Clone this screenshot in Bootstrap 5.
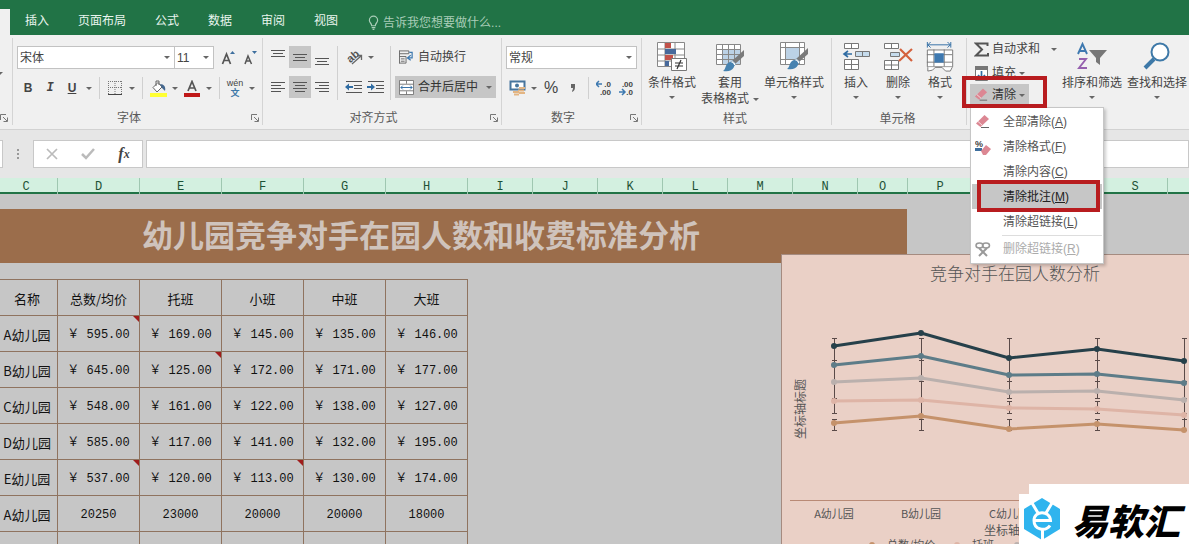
<!DOCTYPE html>
<html lang="zh-CN">
<head>
<meta charset="utf-8">
<meta name="viewport" content="width=device-width, initial-scale=1">
<title>幼儿园竞争对手分析 - Excel</title>
<link href="https://cdn.jsdelivr.net/npm/bootstrap@5.3.0/dist/css/bootstrap.min.css" rel="stylesheet">
<style>
body{font-family:"Liberation Sans","Noto Sans CJK SC",sans-serif;font-size:12px;line-height:16px;color:#444;background:#c6c6c6;height:100vh;overflow:hidden}
/* tab strip */
.tabstrip{background:#217346;height:35px;--bs-nav-link-color:#fff}
.tabstrip .nav-link{color:#e9f5ee;font-size:12px;line-height:16px;padding:12px 14px 6px 15px}
.tabstrip .stub{width:10px;height:26px;background:#f0f0f0}
.tellme{background:none;border:0;outline:0;color:#a9cdb8;width:200px;padding:0;font-size:12px}
.tellme::placeholder{color:#a9cdb8}
/* ribbon */
.ribbon{background:#f0f0f0;border-bottom:1px solid #d2d2d2;height:95px;padding:3px 0 4px}
.grp{border-right:1px solid #d4d4d4;flex:none}
.grp-first{width:13px}.grp-font{width:250px}.grp-align{width:239px}.grp-num{width:140px}.grp-style{width:190px}.grp-cells{width:135px}
.grp footer{height:14px;padding-right:3px;color:#5a5a5a}
.grp-font footer span,.grp-align footer span,.grp-num footer span{padding-right:6px}
.grp svg,.menu svg{flex:none;display:block}
.rb{--bs-btn-padding-x:0;--bs-btn-padding-y:0;--bs-btn-border-width:0px;--bs-btn-border-radius:0;--bs-btn-font-size:12px;--bs-btn-line-height:16px;--bs-btn-color:#444;--bs-btn-active-bg:#c6c6c6;--bs-btn-active-color:#333;--bs-btn-hover-bg:#d5d5d5;display:flex;align-items:center;justify-content:center;flex:none;height:22px;white-space:nowrap}
.sq{width:22px}.car{width:12px}
.bar{width:1px;height:22px;background:#d0d0d0}
.tall{width:1px;height:54px;background:#d0d0d0}
.rsel{--bs-form-select-bg-img:url("data:image/svg+xml,%3csvg xmlns='http://www.w3.org/2000/svg' viewBox='0 0 6 3'%3e%3cpath d='M0 0h6L3 3z' fill='%23666'/%3e%3c/svg%3e");height:23px;padding:0 14px 0 2px;font-size:12px;line-height:20px;color:#444;border:1px solid #c2c2c2;border-radius:0;background-size:6px 3px;background-position:right 4px center;background-color:#fff}
.big{flex-direction:column;justify-content:flex-start;height:66px;padding-top:4px}
.big svg.ic{height:30px}
.big .cap{height:16px;margin-top:3px}
.big svg.dn{margin-top:5px}
.edit{padding-left:3px}
.edit-col{width:90px}
.edit-col .rb{gap:3px;padding:0 4px;margin-bottom:2px}
.edit-col .dropdown .rb{margin:-2px 0 0}
.mark-red{position:absolute;border:4px solid #b81c1f;pointer-events:none;z-index:1002}
.menu.dropdown-menu{position:absolute;top:23px;left:0;min-width:134px;padding:1px 1px 2px;font-size:12px;border:1px solid #c6c6c6;border-radius:0;box-shadow:2px 2px 3px rgba(0,0,0,.2);background:#fff;color:#555}
.menu .dropdown-item{display:flex;align-items:center;gap:12px;height:25px;padding:0 2px 0 3px;color:#555;line-height:16px}
.menu .dropdown-item.active{background:#c6c6c6;color:#222}
.menu .dropdown-item.disabled{color:#ababab}
.menu .dropdown-divider{margin:1px 0 0 30px;border-color:#ddd}
/* formula bar */
.fbar{background:#e6e6e6;padding:10px 0;height:48px}
.box{background:#fff;border:1px solid #c8c8c8;height:28px}
.fin{border:1px solid #c8c8c8;border-radius:0;height:28px;min-height:0;padding:0 4px;font-size:12px;margin-left:3px}
.fx{font-family:"Liberation Serif",serif}
/* grid */
.colhead{display:grid;grid-template-columns:58px repeat(5,82px) repeat(6,65px) 50px repeat(4,65px) 1fr;height:16px;background:#d3f0e0;border-bottom:2px solid #217346;font:12px/18px "Liberation Mono",monospace;color:#1d5236;text-align:center}
.colhead span{border-right:1px solid #9fc7b1}
.colhead span:first-child{padding-right:5px}
.sheet{background:#c6c6c6;padding-top:15px;overflow:hidden;min-height:0}
.band{width:907px;height:54px;background:#9b6d4b;color:#cfc3bc;font-size:31px;line-height:56px;font-weight:700;padding-right:65px;margin:0 0 16px}
.data{width:468px;table-layout:fixed;border-collapse:separate;border-spacing:0;border-top:1px solid #8f735f;color:#111;font:12px/16px "Liberation Mono","Noto Sans CJK SC",monospace;text-align:center}
.data td,.data th{border:solid #8f735f;border-width:0 1px 1px 0;height:36px;padding:2px 0 0;font-weight:400;position:relative;white-space:nowrap}
.data th{font:13px/16px "Noto Sans CJK SC",sans-serif}
.data tbody th,.data th:first-child{padding-right:3px}
.note::after{content:"";position:absolute;top:0;right:0;border:3px solid #a01c1c;border-left-color:transparent;border-bottom-color:transparent}
.chartbox{position:absolute;left:781px;right:0;top:60px;bottom:0;background:#ead0c6;border:1px solid #a58b80;border-width:1px 0 0 1px;overflow:hidden}
.chartbox text{font-family:"Noto Sans CJK SC",sans-serif;fill:#555}
.brand{position:absolute;right:0;bottom:0;width:170px;height:60px;background:#fff;clip-path:polygon(10px 0,100% 0,100% 100%,0 100%,0 10px,10px 10px);padding:9px 9px 0 4px}
.brand b{font:italic 900 36px/52px "Noto Sans CJK SC",sans-serif;color:#000}
</style>
</head>
<body class="d-flex flex-column">
<svg width="0" height="0" class="position-absolute" aria-hidden="true">
  <symbol id="dn" viewBox="0 0 6 3"><path d="M0 0h6L3 3z" fill="#666"/></symbol>
  <symbol id="launch" viewBox="0 0 8 8"><path d="M.5 6V.5H6M3 3l4 4M7.500 3.500v4h-4" fill="none" stroke="#777"/></symbol>
  <symbol id="eraser" viewBox="0 0 16 16"><path d="M1 9.500 9.500 1 14 5 5.500 13z" fill="#dc8793"/><path d="m3 7.500 4.500 4" stroke="#f5dfe1"/><path d="M6 13.500h8" stroke="#666"/></symbol>
  <symbol id="brush" viewBox="0 0 22 22"><path d="M21 0v6L12 14 9 11z" fill="#7a7a7a"/><path d="M9 10.500 13 14l-2 2-4-3z" fill="#fff" stroke="#8aa7bd"/><path d="M7 12c3 0 5 3 4 5-2 4-6 5-11 4 3-1 2-8 7-9z" fill="#4682b0"/></symbol>
</svg>

<nav class="tabstrip nav flex-nowrap align-items-end flex-shrink-0" aria-label="功能区">
  <div class="stub"></div>
  <a class="nav-link" href="#">插入</a>
  <a class="nav-link" href="#">页面布局</a>
  <a class="nav-link" href="#">公式</a>
  <a class="nav-link" href="#">数据</a>
  <a class="nav-link" href="#">审阅</a>
  <a class="nav-link" href="#">视图</a>
  <label class="d-flex align-items-center ps-3 pb-1">
    <svg class="me-1" width="11" height="16" viewBox="0 0 12 16" fill="none" stroke="#a9cdb8" stroke-width="1.300"><path d="M4 11C4 8 1.500 8 1.500 5a4.500 4.500 0 0 1 9 0c0 3-2.500 3-2.500 6zM4 13h4M5 15h2"/></svg>
    <input class="tellme" type="text" placeholder="告诉我您想要做什么..." aria-label="告诉我您想要做什么">
  </label>
</nav>

<div class="ribbon d-flex flex-shrink-0">
  <section class="grp grp-first d-flex flex-column justify-content-between">
    <svg class="mt-4" width="3" height="20" viewBox="0 0 3 20"><path d="M-3 10h6l-3 3z" fill="#666"/></svg>
    <footer class="d-flex align-items-center"><svg width="8" height="8"><use href="#launch"/></svg></footer>
  </section>

  <section class="grp grp-font d-flex flex-column">
    <div class="d-flex align-items-center pt-2 ps-1">
      <select class="form-select rsel" style="width:158px" aria-label="字体"><option>宋体</option></select>
      <select class="form-select rsel border-start-0" style="width:39px" aria-label="字号"><option>11</option></select>
      <button class="btn rb sq ms-1" aria-label="增大字号"><svg width="16" height="16" viewBox="0 0 16 16"><path d="m1.500 14 4-10 4 10M3 10.500h5" fill="none" stroke="#555" stroke-width="1.700"/><path d="m9 4 2.500-3L14 4z" fill="#3e6f9e"/></svg></button>
      <button class="btn rb sq" aria-label="减小字号"><svg width="16" height="16" viewBox="0 0 16 16"><path d="m2 14 3-8 3.500 8M3 11h4" fill="none" stroke="#555" stroke-width="1.500"/><path d="M9 1h5l-2.500 3z" fill="#3e6f9e"/></svg></button>
    </div>
    <div class="d-flex align-items-center mt-2 ps-1">
      <button class="btn rb sq fw-bold">B</button>
      <button class="btn rb sq fw-bold fst-italic font-monospace">I</button>
      <button class="btn rb sq fw-bold text-decoration-underline">U</button>
      <button class="btn rb car" aria-label="下划线样式"><svg width="6" height="3"><use href="#dn"/></svg></button>
      <div class="bar ms-1 me-1"></div>
      <button class="btn rb sq" aria-label="边框"><svg width="14" height="14" viewBox="0 0 14 14" fill="none" stroke="#777"><path d="M.5 0v13M13.500 0v13M7 0v13M0 .5h14M0 6.500h14" stroke-dasharray="1 1"/><path d="M0 13.500h14" stroke="#444"/></svg></button>
      <button class="btn rb car" aria-label="边框样式"><svg width="6" height="3"><use href="#dn"/></svg></button>
      <div class="bar ms-1 me-1"></div>
      <button class="btn rb sq" aria-label="填充颜色"><svg width="17" height="17" viewBox="0 0 17 17"><path d="M3 7.500 8 2.500l4 4.500-5 5z" fill="#fff" stroke="#666"/><path d="M6 6V1h3v4" fill="none" stroke="#666"/><path d="M10 4c4 0 6 3 5 7l-3-3z" fill="#45688f"/><path d="M0 13h17v4H0z" fill="#ff3"/></svg></button>
      <button class="btn rb car" aria-label="填充颜色选项"><svg width="6" height="3"><use href="#dn"/></svg></button>
      <button class="btn rb sq" aria-label="字体颜色"><svg width="16" height="17" viewBox="0 0 16 17"><path d="M4 11 8 1.500 12 11M5.500 8h5" fill="none" stroke="#555" stroke-width="1.700"/><path d="M0 13h16v4H0z" fill="#c01818"/></svg></button>
      <button class="btn rb car" aria-label="字体颜色选项"><svg width="6" height="3"><use href="#dn"/></svg></button>
      <div class="bar ms-1 me-1"></div>
      <button class="btn rb sq" aria-label="拼音"><svg width="18" height="18" viewBox="0 0 18 18" overflow="visible"><text x="9" y="7" text-anchor="middle" font-size="9" fill="#444">wén</text><text x="9" y="17" text-anchor="middle" font-size="9" font-weight="700" fill="#3e79a8">文</text></svg></button>
      <button class="btn rb car" aria-label="拼音选项"><svg width="6" height="3"><use href="#dn"/></svg></button>
    </div>
    <footer class="d-flex align-items-center mt-auto"><span class="flex-grow-1 text-center">字体</span><svg width="8" height="8"><use href="#launch"/></svg></footer>
  </section>

  <section class="grp grp-align d-flex flex-column">
    <div class="d-flex pt-2 ps-1">
      <div>
        <div class="d-flex">
          <button class="btn rb sq" aria-label="顶端对齐"><svg width="14" height="14" viewBox="0 0 14 14" stroke="#555"><path d="M0 .5h14M2 3.500h10M0 6.500h14"/></svg></button>
          <button class="btn rb sq active" aria-label="垂直居中"><svg width="14" height="14" viewBox="0 0 14 14" stroke="#555"><path d="M0 4.500h14M2 7.500h10M0 10.500h14"/></svg></button>
          <button class="btn rb sq" aria-label="底端对齐"><svg width="14" height="14" viewBox="0 0 14 14" stroke="#555" overflow="visible"><path d="M0 8.500h14M2 11.500h10M0 14.500h14"/></svg></button>
        </div>
        <div class="d-flex pt-2">
          <button class="btn rb sq" aria-label="左对齐"><svg width="14" height="12" viewBox="0 0 14 12" stroke="#555"><path d="M0 1.500h14M0 4.500h10M0 7.500h14M0 10.500h10"/></svg></button>
          <button class="btn rb sq active" aria-label="居中"><svg width="14" height="12" viewBox="0 0 14 12" stroke="#555"><path d="M0 1.500h14M2 4.500h10M0 7.500h14M2 10.500h10"/></svg></button>
          <button class="btn rb sq" aria-label="右对齐"><svg width="14" height="12" viewBox="0 0 14 12" stroke="#555"><path d="M0 1.500h14M4 4.500h10M0 7.500h14M4 10.500h10"/></svg></button>
        </div>
      </div>
      <div class="tall mx-1"></div>
      <div>
        <button class="btn rb ps-1" aria-label="方向"><svg width="18" height="18" viewBox="0 0 18 18" overflow="visible"><text x="1" y="12" font-size="11" font-weight="700" fill="#555" transform="rotate(-40 7 9)">ab</text><path d="M6 16 15 8M11 7.500h4.500V12" fill="none" stroke="#666" stroke-width="1.300"/></svg><svg class="ms-1" width="6" height="3"><use href="#dn"/></svg></button>
        <div class="d-flex pt-2">
          <button class="btn rb sq" aria-label="减少缩进"><svg width="17" height="14" viewBox="0 0 17 14"><path d="M1 1.500h16M9 5.500h8M9 8.500h8M1 12.500h16" stroke="#555"/><path d="M0 7l4-3.500V6h4v2H4v2.500z" fill="#2f6ca3"/></svg></button>
          <button class="btn rb sq" aria-label="增加缩进"><svg width="17" height="14" viewBox="0 0 17 14"><path d="M1 1.500h16M9 5.500h8M9 8.500h8M1 12.500h16" stroke="#555"/><path d="M8 7 4 3.500V6H0v2h4v2.500z" fill="#2f6ca3"/></svg></button>
        </div>
      </div>
      <div class="tall mx-1"></div>
      <div>
        <button class="btn rb px-1 gap-1"><svg width="15" height="16" viewBox="0 0 16 16" fill="none"><path d="M.5 1v14M.5 1.500h10v3H.5M.5 7.500h7v7H.5M2 10h4M2 12.500h4" stroke="#666"/><path d="M11 3h3v6h-4m2.500-3L9 9l3.500 2.500" stroke="#3e79b0" stroke-width="1.300"/></svg>自动换行</button>
        <div class="pt-2"><button class="btn rb active px-1 gap-1"><svg width="15" height="15" viewBox="0 0 16 16"><path d="M.5.5h15v15H.5zM.5 4.500h15M.5 11.500h15M8 0v4M8 12v4" fill="#fff" stroke="#777"/><path d="M2 8h12M4 6 2 8l2 2M12 6l2 2-2 2" fill="none" stroke="#2f6ca3"/></svg>合并后居中<svg class="ms-1" width="6" height="3"><use href="#dn"/></svg></button></div>
      </div>
    </div>
    <footer class="d-flex align-items-center mt-auto"><span class="flex-grow-1 text-center">对齐方式</span><svg width="8" height="8"><use href="#launch"/></svg></footer>
  </section>

  <section class="grp grp-num d-flex flex-column">
    <div class="pt-2 px-1"><select class="form-select rsel" aria-label="数字格式"><option>常规</option></select></div>
    <div class="d-flex align-items-center mt-2 ps-1">
      <button class="btn rb sq" aria-label="会计数字格式"><svg width="17" height="16" viewBox="0 0 17 16"><path d="M1.500 1.500h14v8h-14z" fill="#fff" stroke="#47759d" stroke-width="2"/><circle cx="8" cy="5.500" r="2" fill="#47759d"/><path d="M10 8h6M9 10.500h6M4 12h6M10 13h6M5 14.500h5" stroke="#e3b583" stroke-width="2"/></svg></button>
      <button class="btn rb car" aria-label="货币选项"><svg width="6" height="3"><use href="#dn"/></svg></button>
      <button class="btn rb sq fs-6">%</button>
      <button class="btn rb sq" aria-label="千位分隔样式"><svg width="8" height="10" viewBox="0 0 8 10"><path d="M2 1h4v3c0 3-1 4-3 5 0-2 1-2 1-4H2z" fill="#666"/></svg></button>
      <div class="bar ms-1 me-1"></div>
      <button class="btn rb sq" aria-label="增加小数位数"><svg width="16" height="16" viewBox="0 0 16 16"><text x="15" y="7" text-anchor="end" font-size="8" font-weight="700" fill="#444">.0</text><text x="15" y="15" text-anchor="end" font-size="8" font-weight="700" fill="#444">.00</text><path d="M0 4h6M3 1 0 4l3 3" fill="none" stroke="#3e79b0" stroke-width="1.500"/></svg></button>
      <button class="btn rb sq" aria-label="减少小数位数"><svg width="16" height="16" viewBox="0 0 16 16"><text x="15" y="7" text-anchor="end" font-size="8" font-weight="700" fill="#444">.00</text><text x="15" y="15" text-anchor="end" font-size="8" font-weight="700" fill="#444">.0</text><path d="M1 12h6M4 9l3 3-3 3" fill="none" stroke="#3e79b0" stroke-width="1.500"/></svg></button>
    </div>
    <footer class="d-flex align-items-center mt-auto"><span class="flex-grow-1 text-center">数字</span><svg width="8" height="8"><use href="#launch"/></svg></footer>
  </section>

  <section class="grp grp-style d-flex flex-column">
    <div class="d-flex px-1">
      <button class="btn rb big" style="width:52px"><svg class="ic" width="30" height="30" viewBox="0 0 30 30"><path d="M.5.5h27v24H.5zM8 0v24M18 0v24M0 7h28M0 13h28M0 19h28" fill="#fff" stroke="#888"/><path d="M8 1h6v5H8zM8 13h8v5H8z" fill="#c2524a"/><path d="M8 7h11v5H8zM8 19h4v5H8z" fill="#47699b"/><path d="M14.500 16.500h15v12h-15z" fill="#fff" stroke="#777"/><path d="M18 21h8M18 24h8M24 18l-4 9" stroke="#333" stroke-width="1.200"/></svg><span class="cap">条件格式</span><svg class="dn" width="6" height="3"><use href="#dn"/></svg></button>
      <button class="btn rb big" style="width:64px"><svg class="ic" width="30" height="30" viewBox="0 0 30 30"><path d="M1.500 2.500h24v20h-24z" fill="#fff"/><path d="M7 7h19v15H7z" fill="#bcd2e6"/><path d="M1.500 2.500h24v20h-24zM7.500 2v20M13.500 2v20M19.500 2v20M1 7.500h25M1 12.500h25M1 17.500h25" fill="none" stroke="#888"/><use href="#brush" x="8" y="8" width="22" height="22"/></svg><span class="cap">套用</span><span class="d-flex align-items-center gap-1">表格格式<svg width="6" height="3"><use href="#dn"/></svg></span></button>
      <button class="btn rb big" style="width:64px"><svg class="ic" width="30" height="30" viewBox="0 0 30 30"><path d="M1.500.5h24v22h-24zM6.500 0v22M20.500 0v22M1 5.500h24M1 17.500h24" fill="#fff" stroke="#888"/><path d="M7 6h13v11H7z" fill="#bcd2e6"/><use href="#brush" x="8" y="6" width="22" height="22"/></svg><span class="cap">单元格样式</span><svg class="dn" width="6" height="3"><use href="#dn"/></svg></button>
    </div>
    <footer class="mt-auto text-center">样式</footer>
  </section>

  <section class="grp grp-cells d-flex flex-column">
    <div class="d-flex edit">
      <button class="btn rb big" style="width:42px"><svg class="ic" width="28" height="30" viewBox="0 0 28 30"><path d="M2.500 1.500h14v5h-14zM9.500 1v5M2.500 17.500h14v10h-14zM9.500 17v10M2 22.500h14" fill="#fff" stroke="#777"/><path d="M13.500 9.500h14v5h-14zM20.500 9v6" fill="#c6dced" stroke="#777"/><path d="M2 12h8M6 9l-4 3 4 3" fill="none" stroke="#2f6ca3" stroke-width="1.600"/></svg><span class="cap">插入</span><svg class="dn" width="6" height="3"><use href="#dn"/></svg></button>
      <button class="btn rb big" style="width:42px"><svg class="ic" width="30" height="30" viewBox="0 0 30 30"><path d="M1.500 1.500h14v5h-14zM8.500 1v5M1.500 18.500h14v9h-14zM8.500 18v9M1 23h14" fill="#fff" stroke="#777"/><path d="M7.500 10.500h9v4h-9z" fill="#c6dced" stroke="#777"/><path d="M17 7l12 12M29 7 16 19" stroke="#d4613d" stroke-width="2.200"/></svg><span class="cap">删除</span><svg class="dn" width="6" height="3"><use href="#dn"/></svg></button>
      <button class="btn rb big" style="width:42px"><svg class="ic" width="30" height="32" viewBox="0 0 30 32"><path d="M2 3h24M5 0 2 3l3 3M23 0l3 3-3 3M1.500 0v6M26.500 0v6" fill="none" stroke="#2f6ca3"/><path d="M1.500 8.500h27v18h-27zM8.500 8v18M19.500 8v18M1 13.500h27M1 21.500h27" fill="#fff" stroke="#777"/><path d="M9 12h10v10H9z" fill="#3e79b0"/><path d="M2 27v4l5-1 3-3h7l4 4h5l2-4" fill="#fff" stroke="#777"/></svg><span class="cap">格式</span><svg class="dn" width="6" height="3"><use href="#dn"/></svg></button>
    </div>
    <footer class="mt-auto text-center">单元格</footer>
  </section>

  <section class="d-flex edit flex-grow-1">
    <div class="edit-col">
      <button class="btn rb"><svg width="15" height="15" viewBox="0 0 15 15"><path d="M13.500 4V1.500H2L8 7.500 2 13.500h12V11" fill="none" stroke="#555" stroke-width="2"/></svg>自动求和<svg class="ms-2" width="6" height="3"><use href="#dn"/></svg></button>
      <button class="btn rb"><svg width="15" height="15" viewBox="0 0 15 15"><path d="M1.500 1.500h12v13h-12z" fill="#fff" stroke="#777"/><path d="M1 0h13v4H1z" fill="#777"/><path d="M7.500 5v7M4 9l3.500 3.500L11 9" fill="none" stroke="#2f6ca3" stroke-width="1.700"/></svg>填充<svg width="6" height="3"><use href="#dn"/></svg></button>
      <div class="dropdown position-relative">
        <button class="btn rb active" aria-expanded="true"><svg width="15" height="16"><use href="#eraser"/></svg>清除<svg width="6" height="3"><use href="#dn"/></svg></button>
        <span class="mark-red" style="left:-8px;top:-8px;width:85px;height:32px"></span>
        <div class="menu dropdown-menu show">
          <a class="dropdown-item" href="#"><svg width="16" height="16"><use href="#eraser"/></svg><span>全部清除(<u>A</u>)</span></a>
          <a class="dropdown-item" href="#"><svg width="16" height="16" viewBox="0 0 16 16"><text y="8" font-size="9" font-weight="700" fill="#444">%</text><path d="M0 9h7v3H0z" fill="#3e6f9e"/><path d="m6 12 5-6 5 4-5 6H8z" fill="#dc8793"/></svg><span>清除格式(<u>F</u>)</span></a>
          <a class="dropdown-item" href="#"><svg width="16" height="16"></svg><span>清除内容(<u>C</u>)</span></a>
          <div class="position-relative">
            <a class="dropdown-item active" href="#"><svg width="16" height="16"></svg><span>清除批注(<u>M</u>)</span></a>
            <span class="mark-red" style="left:5px;top:-4px;right:2px;height:32px"></span>
          </div>
          <a class="dropdown-item" href="#"><svg width="16" height="16"></svg><span>清除超链接(<u>L</u>)</span></a>
          <hr class="dropdown-divider">
          <a class="dropdown-item disabled" href="#" aria-disabled="true"><svg width="16" height="16" viewBox="0 0 16 16" fill="none" stroke="#999" stroke-width="1.500"><ellipse cx="4.500" cy="4.500" rx="3.500" ry="2.500"/><ellipse cx="11" cy="4.500" rx="3.500" ry="2.500"/><path d="m4 7 8 8M12 7l-8 8" stroke-width="2"/></svg><span>删除超链接(<u>R</u>)</span></a>
        </div>
      </div>
    </div>
    <button class="btn rb big" style="width:64px"><svg class="ic" width="30" height="30" viewBox="0 0 30 30"><path d="m1 12 4.500-10L10 12M3 9h5" fill="none" stroke="#3e79b0" stroke-width="1.900"/><path d="M2 17h7L2 26h8" fill="none" stroke="#9560ae" stroke-width="1.900"/><path d="M12 8h18l-7 8v7l-4-3v-4z" fill="#777"/></svg><span class="cap">排序和筛选</span><svg class="dn" width="6" height="3"><use href="#dn"/></svg></button>
    <button class="btn rb big" style="width:66px"><svg class="ic" width="30" height="30" viewBox="0 0 30 30" fill="none" stroke="#3e79a8"><circle cx="18" cy="10" r="8.500" fill="#fff" stroke-width="2"/><path d="m12 17-9 9" stroke-width="4"/></svg><span class="cap">查找和选择</span><svg class="dn" width="6" height="3"><use href="#dn"/></svg></button>
  </section>
</div>

<div class="fbar d-flex flex-shrink-0">
  <div class="box border-start-0" style="width:3px"></div>
  <svg class="mx-2" width="14" height="28" viewBox="0 0 14 28"><path d="M7 9v11" stroke="#999" stroke-width="2" stroke-dasharray="2 2"/></svg>
  <div class="box d-flex align-items-center justify-content-around" style="width:110px">
    <button class="btn rb sq" aria-label="取消"><svg width="12" height="12" viewBox="0 0 12 12"><path d="m1 1 10 10M11 1 1 11" stroke="#bbb" stroke-width="1.700"/></svg></button>
    <button class="btn rb sq" aria-label="输入"><svg width="14" height="12" viewBox="0 0 14 12"><path d="m1 6 4 4 8-9" fill="none" stroke="#bbb" stroke-width="2.500"/></svg></button>
    <button class="btn rb sq fx fst-italic fw-bold"><span class="fs-6">f</span>x</button>
  </div>
  <input class="form-control fin flex-grow-1 w-auto" type="text" aria-label="编辑栏">
</div>

<div class="colhead flex-shrink-0"><span>C</span><span>D</span><span>E</span><span>F</span><span>G</span><span>H</span><span>I</span><span>J</span><span>K</span><span>L</span><span>M</span><span>N</span><span>O</span><span>P</span><span>Q</span><span>R</span><span>S</span><span class="border-0"></span></div>

<main class="sheet flex-grow-1 position-relative">
  <h1 class="band text-center">幼儿园竞争对手在园人数和收费标准分析</h1>
  <table class="data">
    <colgroup><col style="width:58px"><col span="5" style="width:82px"></colgroup>
    <thead><tr><th>名称</th><th>总数/均价</th><th>托班</th><th>小班</th><th>中班</th><th>大班</th></tr></thead>
    <tbody>
      <tr><th>A幼儿园</th><td class="note">￥ 595.00</td><td>￥ 169.00</td><td>￥ 145.00</td><td>￥ 135.00</td><td>￥ 146.00</td></tr>
      <tr><th>B幼儿园</th><td>￥ 645.00</td><td class="note">￥ 125.00</td><td>￥ 172.00</td><td>￥ 171.00</td><td>￥ 177.00</td></tr>
      <tr><th>C幼儿园</th><td>￥ 548.00</td><td>￥ 161.00</td><td>￥ 122.00</td><td>￥ 138.00</td><td>￥ 127.00</td></tr>
      <tr><th>D幼儿园</th><td>￥ 585.00</td><td>￥ 117.00</td><td>￥ 141.00</td><td>￥ 132.00</td><td>￥ 195.00</td></tr>
      <tr><th>E幼儿园</th><td class="note">￥ 537.00</td><td>￥ 120.00</td><td class="note">￥ 113.00</td><td>￥ 130.00</td><td>￥ 174.00</td></tr>
      <tr><th>A幼儿园</th><td>20250</td><td>23000</td><td>20000</td><td>20000</td><td>18000</td></tr>
      <tr><th></th><td></td><td></td><td></td><td></td><td></td></tr>
    </tbody>
  </table>

  <div class="chartbox">
    <svg class="d-block" width="520" height="320" viewBox="782 255 520 320" role="img" aria-label="竞争对手在园人数分析">
      <text x="930" y="280" font-size="17" font-weight="300">竞争对手在园人数分析</text>
      <text x="805" y="439" font-size="12" transform="rotate(-90 805 439)">坐标轴标题</text>
      <g stroke="#5a4a48" fill="none">
        <path d="M834.500 338v75M834.500 419v11M921.500 338v92M1009.500 338v60M1009.500 401v12M1009.500 419v11M1097.500 338v60M1097.500 401v12M1097.500 419v11M1184.500 338v92"/>
        <path d="M832 338.500h5M832 360.500h5M832 398.500h5M832 413.500h5M832 419.500h5M832 430.500h5M919 338.500h5M919 360.500h5M919 381.500h5M919 401.500h5M919 419.500h5M919 430.500h5M1007 338.500h5M1007 381.500h5M1007 398.500h5M1007 401.500h5M1007 413.500h5M1007 419.500h5M1007 430.500h5M1095 338.500h5M1095 360.500h5M1095 381.500h5M1095 398.500h5M1095 401.500h5M1095 413.500h5M1095 419.500h5M1095 430.500h5M1182 338.500h5M1182 360.500h5M1182 381.500h5M1182 398.500h5M1182 413.500h5M1182 419.500h5M1182 430.500h5"/>
      </g>
      <g fill="none" stroke-width="3" stroke-linejoin="round">
        <g stroke="#26404a"><path d="M834 346 921 333 1009 358 1097 349 1184 361"/><path d="M834 346h0M921 333h0M1009 358h0M1097 349h0M1184 361h0" stroke-width="6" stroke-linecap="round"/></g>
        <g stroke="#5d7c88"><path d="M834 365 921 356 1009 375 1097 374 1184 383"/><path d="M834 365h0M921 356h0M1009 375h0M1097 374h0M1184 383h0" stroke-width="6" stroke-linecap="round"/></g>
        <g stroke="#bab0ad"><path d="M834 382 921 378 1009 392 1097 391 1184 400"/><path d="M834 382h0M921 378h0M1009 392h0M1097 391h0M1184 400h0" stroke-width="6" stroke-linecap="round"/></g>
        <g stroke="#deb4a6"><path d="M834 401 921 400 1009 408 1097 409 1184 415"/><path d="M834 401h0M921 400h0M1009 408h0M1097 409h0M1184 415h0" stroke-width="6" stroke-linecap="round"/></g>
        <g stroke="#c5926b"><path d="M834 423 921 416 1009 429 1097 424 1184 430"/><path d="M834 423h0M921 416h0M1009 429h0M1097 424h0M1184 430h0" stroke-width="6" stroke-linecap="round"/></g>
      </g>
      <path d="M790 500.500h500" stroke="#b98a76"/>
      <g font-size="11" text-anchor="middle"><text x="834" y="518">A幼儿园</text><text x="921" y="518">B幼儿园</text><text x="1009" y="518">C幼儿园</text></g>
      <text x="984" y="535" font-size="12">坐标轴标题</text>
      <g font-size="11"><text x="887" y="549">总数/均价</text><text x="972" y="549">托班</text></g>
      <circle cx="872" cy="545" r="3" fill="#c5926b"/><circle cx="957" cy="545" r="3" fill="#deb4a6"/><circle cx="1017" cy="545" r="3" fill="#bab0ad"/>
    </svg>
  </div>

  <div class="brand d-flex align-items-start justify-content-between">
    <svg class="mt-1" width="38" height="44" viewBox="0 0 38 44"><path d="M19 1 37 12v20L19 43 1 32V12z" fill="#2fb4ee"/><path d="m9 6 6 10M29 6l-6 10" stroke="#fff" stroke-width="3"/><path d="M18 3h4v10h-4z" fill="#2fb4ee"/><path d="M11 23.500h16.500C27 13 11 13 11 23.500c0 10 12 11 16 5M19.500 33v11" fill="none" stroke="#fff" stroke-width="3"/></svg>
    <b>易软汇</b>
  </div>
</main>
<script src="https://cdn.jsdelivr.net/npm/bootstrap@5.3.0/dist/js/bootstrap.bundle.min.js"></script>
</body>
</html>
